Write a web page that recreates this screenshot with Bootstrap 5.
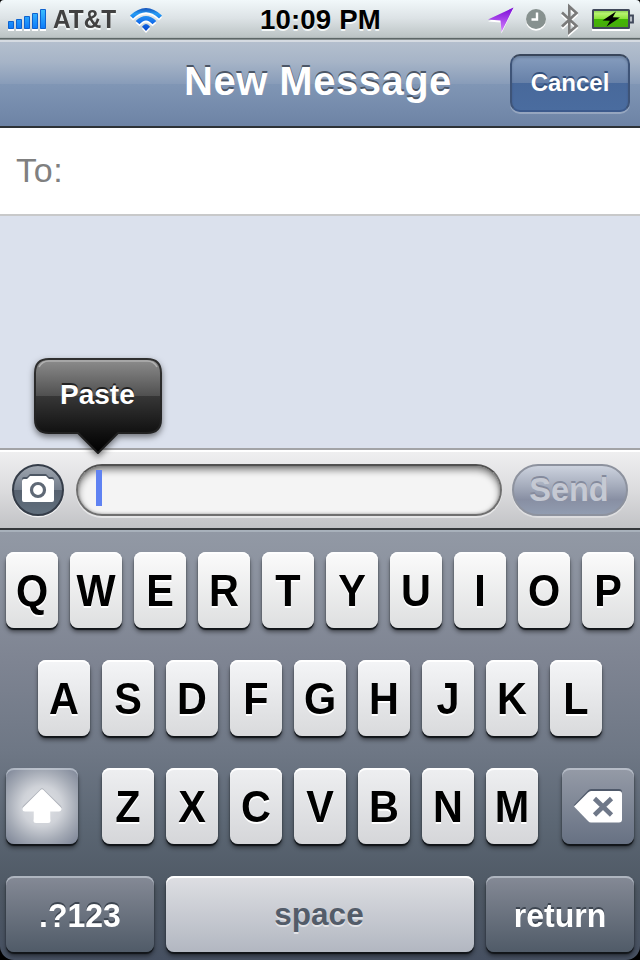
<!DOCTYPE html>
<html lang="en">
<head>
<meta charset="utf-8">
<meta name="viewport" content="width=device-width, initial-scale=1">
<title>New Message</title>
<link href="https://cdn.jsdelivr.net/npm/bootstrap@5.3.0/dist/css/bootstrap.min.css" rel="stylesheet">
<style>
html, body { height: 100%; }
body { font-family: "Liberation Sans", Arial, sans-serif; background: #000; overflow: hidden; line-height: 1; }
.phone { width: 640px; height: 960px; background: #000; }
svg { display: block; overflow: visible; flex: none; }

.status { height: 40px; background: linear-gradient(#f1f8fa 0, #dde3e6 45%, #bcc4c5 37px, #a5adae 38px, #5d6767 38px, #5d6767 39px, #8a9293 39px); padding: 0 6px 2px 8px; border-radius: 4px 4px 0 0; }
.carrier { margin-left: 7px; padding-top: 2px; font-size: 25.4px; font-weight: bold; color: #414141; text-shadow: 0 2px 0 #f4f8f8; transform: scaleX(.96); transform-origin: 0 50%; }
.wifi { left: 130px; top: 8px; }
.clock { left: 260px; top: 6px; font-size: 27.6px; font-weight: bold; color: #000; text-shadow: 0 2px 0 #f4f8f8; letter-spacing: .15px; white-space: nowrap; }

.titlebar { height: 88px; border-bottom: 2px solid #2d3236; padding: 0 10px 0 0; background: linear-gradient(#d6dbe2 0, #d6dbe2 2px, #b4bfce 2px, #a6b4c7 22px, #889cb9 44px, #8096b5 44px, #6d83a5 86px); }
.titlebar h1 { left: 184px; top: 21px; font-size: 40px; line-height: 40px; font-weight: bold; color: #fff; letter-spacing: .5px; text-shadow: 0 -2px 0 #4b5666; white-space: nowrap; }
.btn-cancel { width: 120px; height: 58px; padding: 0; border: 2px solid; border-color: #39465b #3e5478 #3c5a8c; border-radius: 10px; color: #fff; font-size: 24px; font-weight: bold; text-shadow: 0 -2px 0 #344f7a; background: linear-gradient(#869dbe 0, #6680a8 50%, #48699b 50%, #4a6c9f 100%); box-shadow: 0 2px 0 rgba(255,255,255,.25), inset 0 2px 2px rgba(40,55,80,.25); }

.recipient { height: 88px; background: #fff; border-bottom: 2px solid #c8c9ca; padding: 0 0 3px 16px; font-size: 34px; color: #808080; letter-spacing: .7px; }
.thread { height: 232px; background: #dbe1ed; }

.composer { height: 82px; padding: 14px 12px; border-top: 2px solid #a2a3a6; border-bottom: 2px solid #35383b; background: linear-gradient(#fff 0, #fff 2px, #efeff0 2px, #dcdcde 40px, #c2c3c6 100%); }
.entry { width: 426px; height: 52px; margin-left: 12px; margin-right: 10px; border-radius: 26px; border: 2px solid #6f6f6f; border-top-color: #515151; background: #f4f4f4; box-shadow: inset 0 4px 7px rgba(0,0,0,.48), inset 0 0 3px rgba(0,0,0,.3), 0 2px 0 rgba(255,255,255,.5); padding: 4px 0 0 18px; }
.caret { width: 6px; height: 36px; background: #5f82f2; }
.btn-send { width: 116px; height: 52px; padding: 0 2px 0 0; border: 2px solid #8d929e; border-radius: 26px; font-size: 32.5px; line-height: 48px; font-weight: bold; color: #c5c9d3; text-shadow: 0 -2px 0 #858b9d; background: linear-gradient(#ccd2de 0, #a5acbc 42%, #888fa3 70%, #919cb0 100%); box-shadow: 0 2px 0 rgba(255,255,255,.35); }

.callout { left: 34px; top: 358px; width: 128px; height: 96px; }
.callout span { left: 26px; top: 23px; font-size: 28px; line-height: 28px; font-weight: bold; color: #fff; text-shadow: 0 -2px 0 #222; }

.keyboard { height: 430px; padding: 20px 6px 8px; gap: 32px; border-top: 2px solid #a8b1bb; background: linear-gradient(#9299a5 0, #7e8492 130px, #6e7785 220px, #5c6774 290px, #4e5864 360px, #465061 100%); border-radius: 0 0 14px 14px; }
.keyrow { gap: 12px; }
.key { width: 52px; height: 76px; padding: 1px 0 0; border: 0; border-radius: 8px; font-size: 44px; font-weight: bold; line-height: 1; color: #000; text-shadow: 0 2px 0 #fff; background: linear-gradient(#fbfbfb, #dedfe0); box-shadow: inset 0 2px 0 #fff, 0 2px 1px #111519, 0 4px 4px rgba(0,0,0,.45); }
.key span { display: block; transform: scaleX(.94); }
.row-b .key { background: linear-gradient(#f4f5f7, #d9dadc); }
.row-c .key { background: linear-gradient(#eeeff1, #d5d6d9); }
.keyrow .key-dark { color: #fff; font-size: 34px; text-shadow: 0 -2px 0 #3d4550; box-shadow: inset 0 2px 0 rgba(210,216,226,.55), 0 2px 1px #111519, 0 4px 4px rgba(0,0,0,.45); background: linear-gradient(#858a96, #505b68); }
.keyrow .key-side { width: 72px; padding: 0; }
.keyrow .key-shift { background: radial-gradient(circle at 50% 50%, #e2e4e8 0, #cfd2d8 20px, #a4aab5 35px, #7f8798 50px); }
.keyrow .key-delete { background: linear-gradient(#959ba7, #677183); }
.keyrow .key-wide { width: 148px; }
.keyrow .key-space { width: 308px; padding-right: 2px; font-size: 31.5px; color: #535c69; text-shadow: 0 2px 0 #e3e4e8; background: linear-gradient(#dedfe3, #b2b7c1); }
</style>
</head>
<body>
<main class="phone position-relative d-flex flex-column mx-0">
  <header class="status position-relative d-flex align-items-center flex-shrink-0">
    <svg width="38" height="24" viewBox="0 0 38 24">
      <defs><linearGradient id="sig" gradientUnits="userSpaceOnUse" x1="0" y1="2" x2="0" y2="22"><stop stop-color="#3cc0ff"/><stop offset="1" stop-color="#0c78f8"/></linearGradient></defs>
      <path d="M0 23h6M8 23h6M16 23h6M24 23h6M32 23h6" stroke="#fff" stroke-width="2"/>
      <g fill="url(#sig)" stroke="#0e62cf" stroke-width="1"><path d="M.5 14.500h5v7h-5z"/><path d="M8.500 12.500h5v9h-5z"/><path d="M16.500 9.500h5v12h-5z"/><path d="M24.500 6.500h5v15h-5z"/><path d="M32.500 2.500h5v19h-5z"/></g>
    </svg>
    <span class="carrier d-block">AT&amp;T</span>
    <svg class="wifi position-absolute" width="32" height="24" viewBox="0 0 32 24">
      <defs><linearGradient id="wifi" gradientUnits="userSpaceOnUse" x1="0" y1="0" x2="0" y2="23"><stop stop-color="#1450b8"/><stop offset=".25" stop-color="#269bf4"/><stop offset=".6" stop-color="#1571ec"/><stop offset="1" stop-color="#0644c8"/></linearGradient></defs>
      <g fill="#fff" transform="translate(0 2)"><path d="M0 7.500Q16-7.500 32 7.500L29 10.500Q16-2 3 10.500z"/><path d="M5.700 13Q16 3 26.300 13L22.500 16.300Q16 8.500 9.500 16.300z"/><path d="M12 18.800Q16 13 20 18.800L16 23z"/></g>
      <g fill="url(#wifi)"><path d="M0 7.500Q16-7.500 32 7.500L29 10.500Q16-2 3 10.500z"/><path d="M5.700 13Q16 3 26.300 13L22.500 16.300Q16 8.500 9.500 16.300z"/><path d="M12 18.800Q16 13 20 18.800L16 23z"/></g>
    </svg>
    <time class="clock position-absolute">10:09 PM</time>
    <svg class="ms-auto" width="146" height="38" viewBox="488 0 146 38">
      <defs>
        <linearGradient id="loc" x1="0" y1="0" x2="0" y2="1"><stop stop-color="#7a09d6"/><stop offset="1" stop-color="#d685ff"/></linearGradient>
        <linearGradient id="bat" x1="0" y1="0" x2="0" y2="1"><stop stop-color="#7cc94b"/><stop offset=".2" stop-color="#b6f36e"/><stop offset=".48" stop-color="#8ce43a"/><stop offset=".52" stop-color="#42b803"/><stop offset="1" stop-color="#48a80e"/></linearGradient>
      </defs>
      <path d="M513 9.500L488 21.500L500.500 22.500L501.500 33.500Z" fill="#fff"/>
      <path d="M513.500 7.500L488 19.500L500.500 20.500L501.500 32Z" fill="url(#loc)"/>
      <circle cx="536" cy="20.800" r="10" fill="#fff"/><circle cx="536" cy="19" r="10" fill="#87918f"/>
      <path d="M537 12.500V19.500H531.500" fill="none" stroke="#fff" stroke-width="2.400"/>
      <g fill="none" stroke-width="2.600"><path d="M562 12.500L576.500 26L569.300 32.200V6.500L576.500 13L562 26.500" stroke="#fff" transform="translate(0 2)"/><path d="M562 12.500L576.500 26L569.300 32.200V6.500L576.500 13L562 26.500" stroke="#7a7a7a"/></g>
      <path d="M592 30h38" stroke="#fff" stroke-width="2"/>
      <rect x="593" y="10" width="36" height="18" rx=".5" fill="url(#bat)" stroke="#40485a" stroke-width="2"/>
      <path d="M630 15.500h3v7h-3" fill="#b8bec6" stroke="#40485a" stroke-width="1.800"/>
      <path d="M616 11.500L602.500 20.500L610 20.800L606.500 26.500L620 17.500L612.800 17.200Z"/>
    </svg>
  </header>

  <nav class="titlebar position-relative d-flex align-items-center justify-content-end flex-shrink-0">
    <h1 class="position-absolute m-0">New Message</h1>
    <button class="btn btn-cancel" type="button">Cancel</button>
  </nav>

  <div class="recipient d-flex align-items-center flex-shrink-0">To:</div>
  <div class="thread flex-shrink-0"></div>

  <div class="composer d-flex align-items-start flex-shrink-0">
    <svg width="52" height="52" viewBox="0 0 52 52" role="img" aria-label="Camera">
      <defs><linearGradient id="cam" x1="0" y1="0" x2="0" y2="1"><stop stop-color="#a0a7b1"/><stop offset=".5" stop-color="#737d8b"/><stop offset=".5" stop-color="#56616f"/><stop offset="1" stop-color="#62707e"/></linearGradient></defs>
      <circle cx="26" cy="27.500" r="26" fill="#efeff0"/>
      <circle cx="26" cy="26" r="25" fill="url(#cam)" stroke="#343c48" stroke-width="2"/>
      <path d="M12 14h3l3-3h16l3 3h3q2 0 2 2v19q0 2-2 2H12q-2 0-2-2V16q0-2 2-2z" fill="#4d5764" transform="translate(0 -1)"/>
      <path d="M12 15h3l3-3h16l3 3h3q2 0 2 2v19q0 2-2 2H12q-2 0-2-2V17q0-2 2-2z" fill="#fff"/>
      <circle cx="26" cy="26" r="6.500" fill="#fff" stroke="#5f6976" stroke-width="3.200"/>
    </svg>
    <div class="entry flex-shrink-0"><div class="caret"></div></div>
    <button class="btn btn-send flex-shrink-0" type="button">Send</button>
  </div>

  <section class="keyboard d-flex flex-column flex-shrink-0">
    <div class="keyrow d-flex justify-content-center">
      <button class="key"><span>Q</span></button><button class="key"><span>W</span></button><button class="key"><span>E</span></button><button class="key"><span>R</span></button><button class="key"><span>T</span></button><button class="key"><span>Y</span></button><button class="key"><span>U</span></button><button class="key"><span>I</span></button><button class="key"><span>O</span></button><button class="key"><span>P</span></button>
    </div>
    <div class="keyrow row-b d-flex justify-content-center">
      <button class="key"><span>A</span></button><button class="key"><span>S</span></button><button class="key"><span>D</span></button><button class="key"><span>F</span></button><button class="key"><span>G</span></button><button class="key"><span>H</span></button><button class="key"><span>J</span></button><button class="key"><span>K</span></button><button class="key"><span>L</span></button>
    </div>
    <div class="keyrow row-c d-flex justify-content-between">
      <button class="key key-dark key-side key-shift d-flex align-items-center justify-content-center" aria-label="Shift">
        <svg width="40" height="36" viewBox="0 0 40 36"><g stroke-linejoin="round" stroke-width="5"><path d="M20 3L37 19.500H26V30.500H14V19.500H3Z" fill="#aeb2ba" stroke="#aeb2ba"/><path d="M20 4L37 21H26V32.500H14V21H3Z" fill="#fff" stroke="#fff"/></g></svg>
      </button>
      <div class="d-flex keyrow">
        <button class="key"><span>Z</span></button><button class="key"><span>X</span></button><button class="key"><span>C</span></button><button class="key"><span>V</span></button><button class="key"><span>B</span></button><button class="key"><span>N</span></button><button class="key"><span>M</span></button>
      </div>
      <button class="key key-dark key-side key-delete d-flex align-items-center justify-content-center" aria-label="Delete">
        <svg width="48" height="34" viewBox="0 0 48 34"><path d="M0 16L14 1.500Q15 0 17 0H45Q48 0 48 3V29Q48 32 45 32H17Q15 32 14 30.500Z" fill="#4f596a"/><path d="M0 17.500L14 3.500Q15.500 2 17 2H45Q48 2 48 5V30.500Q48 33.500 45 33.500H17Q15.500 33.500 14 32Z" fill="#fff"/><path d="M20.500 9.500L37.500 26M37.500 9.500L20.500 26" stroke="#6f7889" stroke-width="4.600"/></svg>
      </button>
    </div>
    <div class="keyrow d-flex">
      <button class="key key-dark key-wide"><span>.?123</span></button><button class="key key-space">space</button><button class="key key-dark key-wide"><span>return</span></button>
    </div>
  </section>

  <div class="callout position-absolute" role="tooltip">
    <svg width="128" height="96" viewBox="0 0 128 96">
      <defs>
        <linearGradient id="pop" gradientUnits="userSpaceOnUse" x1="0" y1="2" x2="0" y2="94"><stop stop-color="#8c8c8c"/><stop offset=".39" stop-color="#505050"/><stop offset=".39" stop-color="#373737"/><stop offset=".8" stop-color="#101010"/><stop offset="1" stop-color="#000"/></linearGradient>
        <linearGradient id="rim" x1="0" y1="0" x2="0" y2="1"><stop stop-color="#303030"/><stop offset="1" stop-color="#1c1c1c"/></linearGradient>
      </defs>
      <path d="M15 1H113Q127 1 127 15V61Q127 75 113 75H84L64 95L44 75H15Q1 75 1 61V15Q1 1 15 1Z" fill="url(#pop)" stroke="url(#rim)" stroke-width="2" stroke-linejoin="round" filter="drop-shadow(0 3px 3px rgba(0,0,0,.5))"/>
      <path d="M5 9Q8 3 15 3H113Q120 3 123 9" fill="none" stroke="#b0b0b0" stroke-width="1.500"/>
    </svg>
    <span class="position-absolute">Paste</span>
  </div>
</main>
<script src="https://cdn.jsdelivr.net/npm/bootstrap@5.3.0/dist/js/bootstrap.bundle.min.js"></script>
</body>
</html>
